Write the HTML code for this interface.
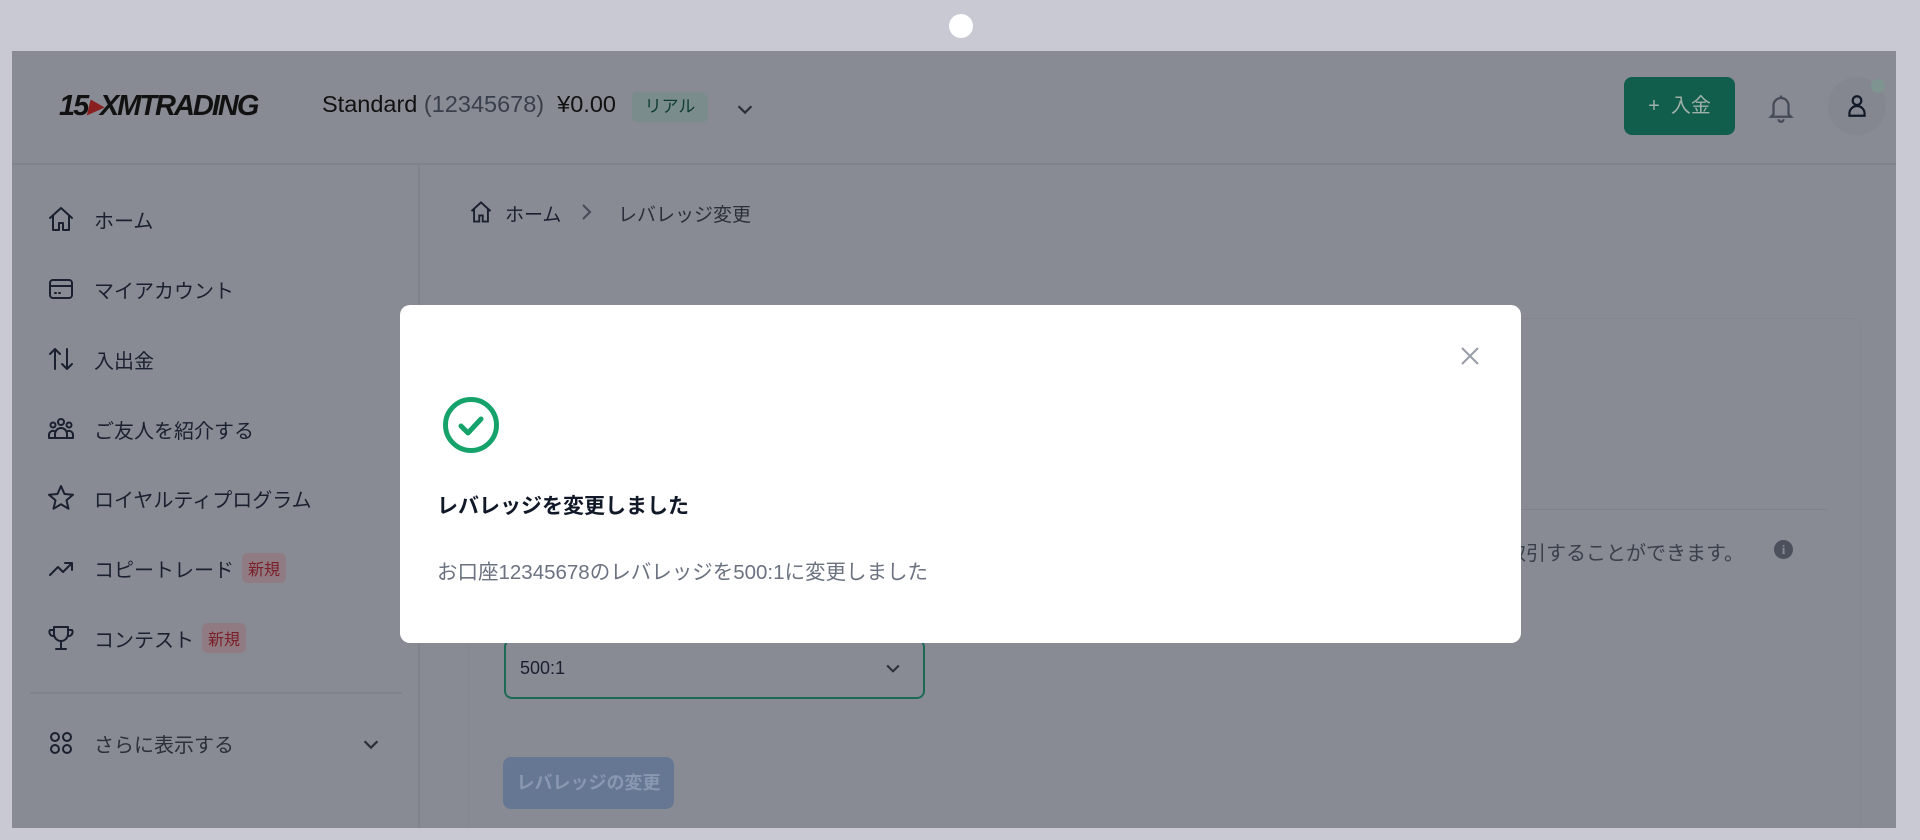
<!DOCTYPE html>
<html><head><meta charset="utf-8"><style>
*{box-sizing:border-box;margin:0;padding:0}
body{width:1920px;height:840px;background:#c9c9d4;position:relative;overflow:hidden;font-family:"Liberation Sans","Noto Sans CJK JP",sans-serif;color:#1b2030}
.abs{position:absolute}
#app{left:12px;top:51px;width:1884px;height:777px;background:#888b93;overflow:hidden}
.dot{left:949px;top:14px;width:24px;height:24px;border-radius:50%;background:#fff}
.hdr{left:0;top:0;width:1884px;height:114px;border-bottom:2px solid #7f828b}
.side{left:0;top:114px;width:408px;height:663px;border-right:2px solid #80838c}
.item{position:absolute;left:34px;display:flex;align-items:center;font-size:20px;color:#1b2030;height:30px}
.item svg{width:30px;height:30px;margin-right:18px;fill:none;stroke:#1b2030;stroke-width:2;stroke-linecap:round;stroke-linejoin:round}
.new{margin-left:8px;background:#8f7b81;color:#7b1f2a;font-size:16px;padding:3px 6px;border-radius:6px}
.modal{left:400px;top:305px;width:1121px;height:338px;background:#fff;border-radius:10px}
</style></head><body>
<div class="abs dot"></div>
<div id="app" class="abs">
 <div class="abs hdr">
  <div class="abs" style="left:47px;top:37px;font:italic bold 29px 'Liberation Sans',sans-serif;letter-spacing:-2px;color:#111">15<span style="color:#8a1f1f">▸</span>XMTRADING</div>
  <div class="abs" style="left:310px;top:40px;font-size:23.5px;color:#111">Standard <span style="color:#3a3f4c">(12345678)</span>&nbsp; ¥0.00</div>
  <div class="abs" style="left:620px;top:41px;width:76px;height:30px;background:#7b8c8c;border-radius:5px;font-size:17px;color:#0e3d32;text-align:center;line-height:30px">リアル</div>
  <svg class="abs" style="left:722px;top:47px" width="22" height="22" viewBox="0 0 24 24" fill="none" stroke="#2a2f3a" stroke-width="2.5"><path d="M5 9l7 7 7-7"/></svg>
  <div class="abs" style="left:1612px;top:26px;width:111px;height:58px;background:#125e4c;border-radius:8px;color:#9fb0a9;font-size:20px;text-align:center;line-height:58px">+&nbsp; 入金</div>
  <svg class="abs" style="left:1754px;top:40px" width="30" height="34" viewBox="0 0 24 26" fill="none" stroke="#454a57" stroke-width="1.8"><path d="M6 18V11a6 6 0 0112 0v7l2 2H4zM10 22a2 2 0 004 0M12 3v2"/></svg>
  <div class="abs" style="left:1816px;top:26px;width:58px;height:58px;border-radius:50%;background:#848790"></div>
  <div class="abs" style="left:1859px;top:28px;width:14px;height:14px;border-radius:50%;background:#7d948f"></div>
  <svg class="abs" style="left:1832px;top:42px" width="26" height="26" viewBox="0 0 24 24" fill="none" stroke="#111827" stroke-width="2"><circle cx="12" cy="7" r="4"/><path d="M5 21v-2a7 7 0 0114 0v2z"/></svg>
 </div>
 <div class="abs side">
  <div class="item" style="top:39px"><svg viewBox="0 0 30 30"><path d="M4 14L15 4l11 10M7 12v14h6v-7h4v7h6V12"/></svg>ホーム</div>
  <div class="item" style="top:109px"><svg viewBox="0 0 30 30"><rect x="4" y="6" width="22" height="18" rx="3"/><path d="M4 12h22M9 19h1M13 19h1"/></svg>マイアカウント</div>
  <div class="item" style="top:179px"><svg viewBox="0 0 30 30"><path d="M9 25V5M4 10l5-5 5 5M21 5v20M16 20l5 5 5-5"/></svg>入出金</div>
  <div class="item" style="top:249px"><svg viewBox="0 0 30 30"><circle cx="15" cy="8" r="3"/><circle cx="7" cy="11" r="2.5"/><circle cx="23" cy="11" r="2.5"/><path d="M9 24v-4a6 6 0 0112 0v4zM3 24v-3a4 4 0 015-4M27 24v-3a4 4 0 00-5-4M3 24h24"/></svg>ご友人を紹介する</div>
  <div class="item" style="top:318px"><svg viewBox="0 0 30 30"><path d="M15 3l3.5 8 8.5.7-6.5 5.6 2 8.4L15 21.3 7.5 25.7l2-8.4L3 11.7l8.5-.7z"/></svg>ロイヤルティプログラム</div>
  <div class="item" style="top:388px"><svg viewBox="0 0 30 30"><path d="M4 22l8-8 5 5 9-9M19 10h7v7"/></svg>コピートレード<span class="new">新規</span></div>
  <div class="item" style="top:458px"><svg viewBox="0 0 30 30"><path d="M8 4h14v7a7 7 0 01-14 0zM15 18v7M10 26h10M8 7H4a4 4 0 004 6M22 7h4a4 4 0 01-4 6"/></svg>コンテスト<span class="new">新規</span></div>
  <div class="abs" style="left:18px;top:527px;width:372px;height:2px;background:#80838c"></div>
  <div class="item" style="top:563px"><svg viewBox="0 0 30 30"><circle cx="9" cy="9" r="4"/><circle cx="21" cy="9" r="4"/><circle cx="9" cy="21" r="4"/><circle cx="21" cy="21" r="4"/></svg><span style="color:#2a2f3a">さらに表示する</span></div>
  <svg class="abs" style="left:348px;top:568px" width="22" height="22" viewBox="0 0 24 24" fill="none" stroke="#2a2f3a" stroke-width="2.5"><path d="M5 9l7 7 7-7"/></svg>
 </div>
 <svg class="abs" style="left:456px;top:148px" width="26" height="26" viewBox="0 0 30 30" fill="none" stroke="#1b2030" stroke-width="2.2"><path d="M4 14L15 4l11 10M7 12v14h6v-7h4v7h6V12"/></svg>
 <div class="abs" style="left:493px;top:149px;font-size:19px;color:#1b2030">ホーム</div>
 <svg class="abs" style="left:565px;top:151px" width="18" height="20" viewBox="0 0 18 20" fill="none" stroke="#454a57" stroke-width="2"><path d="M6 3l7 7-7 7"/></svg>
 <div class="abs" style="left:606px;top:149px;font-size:19px;color:#2a2f3a">レバレッジ変更</div>
 <div class="abs" style="left:456px;top:267px;width:1393px;height:530px;border:1px solid #848790;border-radius:8px"></div>
 <div class="abs" style="left:456px;top:458px;width:1359px;height:1px;background:#7f828b"></div>
 <div class="abs" style="left:1474px;top:486px;font-size:20px;color:#3a3f4c">を取引することができます。</div>
 <div class="abs" style="left:1762px;top:489px;width:19px;height:19px;border-radius:50%;background:#4b505c;color:#888b93;font:bold 13px 'Liberation Serif',serif;text-align:center;line-height:19px">i</div>
 <div class="abs" style="left:492px;top:588px;width:421px;height:60px;border:2px solid #1c6a55;border-radius:8px"></div>
 <div class="abs" style="left:508px;top:607px;font-size:18px;color:#1b2030">500:1</div>
 <svg class="abs" style="left:871px;top:607px" width="20" height="20" viewBox="0 0 24 24" fill="none" stroke="#2a2f3a" stroke-width="2.5"><path d="M5 9l7 7 7-7"/></svg>
 <div class="abs" style="left:491px;top:706px;width:171px;height:52px;background:#667794;border-radius:8px;color:#8a97b0;font-size:18px;font-weight:bold;text-align:center;line-height:52px">レバレッジの変更</div>
</div>
<div class="abs modal">
 <svg class="abs" style="left:1059px;top:40px" width="22" height="22" viewBox="0 0 22 22" stroke="#9ca0a9" stroke-width="2.2"><path d="M3 3l16 16M19 3L3 19"/></svg>
 <svg class="abs" style="left:42px;top:91px" width="58" height="58" viewBox="0 0 58 58" fill="none" stroke="#16a36b" stroke-width="5"><circle cx="29" cy="29" r="25.5"/><path d="M19 30l7 7 13-14" stroke-linecap="round" stroke-linejoin="round"/></svg>
 <div class="abs" style="left:37px;top:185px;font-size:21px;font-weight:bold;color:#111827">レバレッジを変更しました</div>
 <div class="abs" style="left:37px;top:250px;font-size:20.5px;color:#6b7280">お口座12345678のレバレッジを500:1に変更しました</div>
</div>
</body></html>
